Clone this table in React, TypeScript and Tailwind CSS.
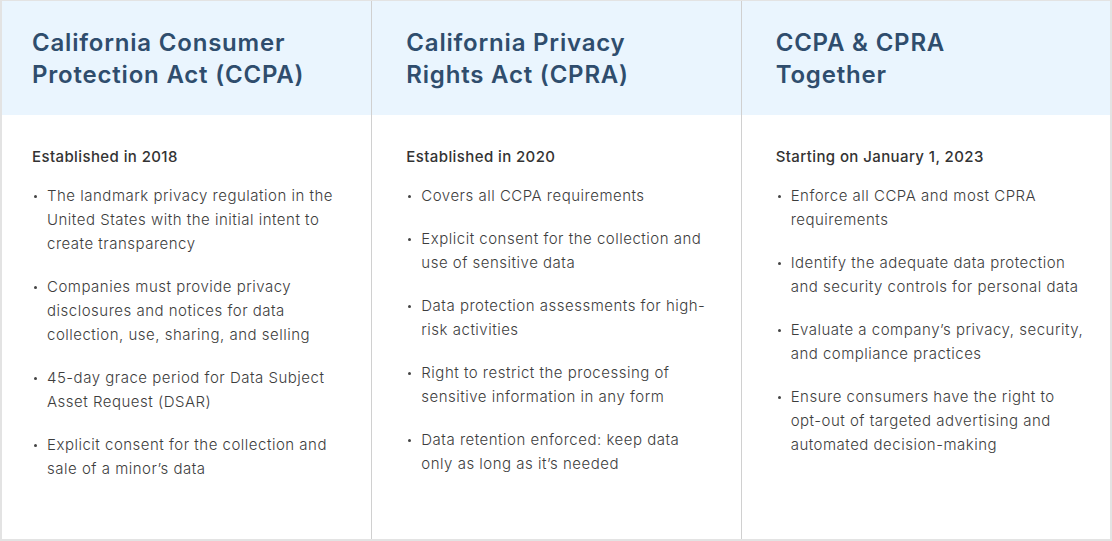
import React from 'react';

type Column = {
    title: string[];
    since: string;
    items: string[][];
};

const COLUMNS: Column[] = [
    {
        title: ['California Consumer', 'Protection Act (CCPA)'],
        since: 'Established in 2018',
        items: [
            ['The landmark privacy regulation in the', 'United States with the initial intent to', 'create transparency'],
            ['Companies must provide privacy', 'disclosures and notices for data', 'collection, use, sharing, and selling'],
            ['45-day grace period for Data Subject', 'Asset Request (DSAR)'],
            ['Explicit consent for the collection and', 'sale of a minor’s data'],
        ],
    },
    {
        title: ['California Privacy', 'Rights Act (CPRA)'],
        since: 'Established in 2020',
        items: [
            ['Covers all CCPA requirements'],
            ['Explicit consent for the collection and', 'use of sensitive data'],
            ['Data protection assessments for high-', 'risk activities'],
            ['Right to restrict the processing of', 'sensitive information in any form'],
            ['Data retention enforced: keep data', 'only as long as it’s needed'],
        ],
    },
    {
        title: ['CCPA & CPRA', 'Together'],
        since: 'Starting on January 1, 2023',
        items: [
            ['Enforce all CCPA and most CPRA', 'requirements'],
            ['Identify the adequate data protection', 'and security controls for personal data'],
            ['Evaluate a company’s privacy, security,', 'and compliance practices'],
            ['Ensure consumers have the right to', 'opt-out of targeted advertising and', 'automated decision-making'],
        ],
    },
];

function Col({ col, first }: { col: Column; first: boolean }) {
    const pad = first ? 'pl-[30px]' : 'pl-[34px] border-l border-[#d0d0d0]';
    return (
        <div className={`flex flex-col ${pad}`}>
            <div className="bg-[#eaf5fe] -ml-[34px] pl-[34px] pt-[26px] h-[114px]">
                <h2 className="text-[24px] leading-[32px] font-semibold tracking-[0.8px] text-[#2f4d6d]">
                    {col.title.map((t) => (
                        <span key={t} className="block whitespace-nowrap">{t}</span>
                    ))}
                </h2>
            </div>
            <div className="pt-[30px] pb-6">
                <p className="text-[15px] leading-[24px] font-medium tracking-[0.4px] text-[#333333]">{col.since}</p>
                <ul className="mt-[15px] space-y-[19px]">
                    {col.items.map((lines, i) => (
                        <li key={i} className="flex text-[15px] leading-[24px] font-light tracking-[0.5px] text-[#3d3d3d]">
                            <span className="w-[15px] shrink-0 flex pt-[11px] pl-[2px]">
                                <span className="w-[3px] h-[3px] rounded-full bg-[#444]" />
                            </span>
                            <span>
                                {lines.map((l) => (
                                    <span key={l} className="block whitespace-nowrap">{l}</span>
                                ))}
                            </span>
                        </li>
                    ))}
                </ul>
            </div>
        </div>
    );
}

export default function App() {
    return (
        <div className="w-[1112px] h-[541px] bg-white overflow-hidden" style={{ fontFamily: 'Inter, "Noto Sans", sans-serif' }}>
            <div className="h-full border-2 border-[#e3e3e3] border-t-[1px] grid grid-cols-3 overflow-hidden">
                {COLUMNS.map((c, i) => (
                    <Col key={i} col={c} first={i === 0} />
                ))}
            </div>
        </div>
    );
}
